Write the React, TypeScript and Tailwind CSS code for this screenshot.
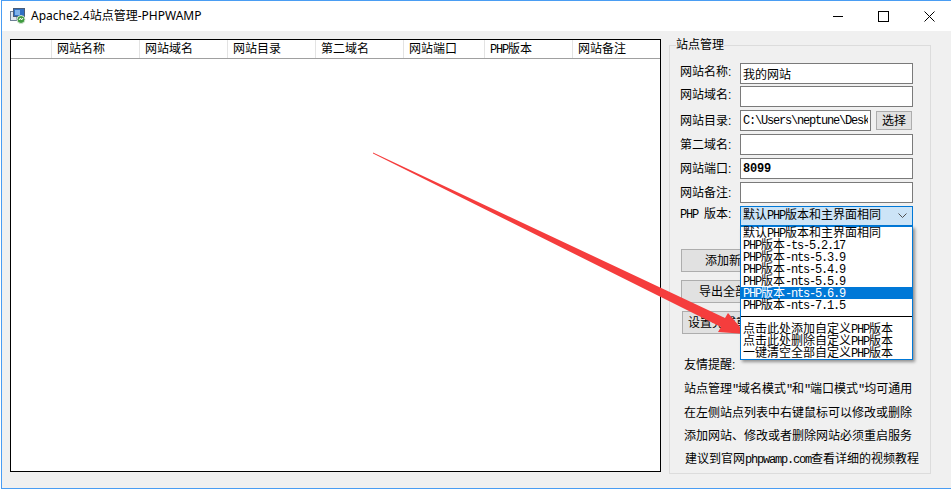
import React from 'react';

const L: React.FC<{ children: React.ReactNode }> = ({ children }) => (
  <span className="font-['Liberation_Mono','Noto_Sans_CJK_SC',monospace] tracking-[-1.2px]">{children}</span>
);

const columns = [
  { name: '', width: 'w-[41px]' },
  { name: '网站名称', width: 'w-[88px]' },
  { name: '网站域名', width: 'w-[88px]' },
  { name: '网站目录', width: 'w-[88px]' },
  { name: '第二域名', width: 'w-[88px]' },
  { name: '网站端口', width: 'w-[81px]' },
  { name: 'PHP', rest: '版本', width: 'w-[88px]' },
];

const versions = ['-ts-5.2.17', '-nts-5.3.9', '-nts-5.4.9', '-nts-5.5.9', '-nts-5.6.9', '-nts-7.1.5'];

const AppIcon = () => (
  <svg width="17" height="16" viewBox="0 0 17 16" className="shrink-0">
    <rect x="0.5" y="3.5" width="6" height="9" fill="#dfe6ee" stroke="#6d7f96" />
    <rect x="3.5" y="0.5" width="11" height="8" fill="#2f6fc4" stroke="#4a5d78" />
    <rect x="5" y="2" width="5" height="5" fill="#7fb2ea" />
    <rect x="6" y="9" width="7" height="3" fill="#9aa7b8" />
    <circle cx="11" cy="11.5" r="4" fill="#3f9b3f" stroke="#d8e4d8" />
    <path d="M9 12l1.5-2 1 2 1.5-2" fill="none" stroke="#fff" strokeWidth="1" />
  </svg>
);

const Field: React.FC<{ label: React.ReactNode; className?: string; raised?: boolean; children: React.ReactNode }> = ({ label, className, raised, children }) => (
  <div className={`flex h-[21px] items-center ${className ?? ''}`}>
    <span className={`w-[60px] shrink-0 whitespace-nowrap ${raised ? 'pb-[3px]' : ''}`}>{label}</span>
    {children}
  </div>
);

const TextBox: React.FC<{ value?: string; className?: string }> = ({ value, className }) => (
  <input
    readOnly
    value={value ?? ''}
    className={`h-[21px] w-[173px] border border-[#7a7a7a] bg-white px-[2px] leading-[19px] outline-none ${className ?? ''}`}
  />
);

const ActionButton: React.FC<{ className?: string; children: React.ReactNode }> = ({ className, children }) => (
  <button className={`flex h-[23px] w-[108px] items-center justify-center whitespace-nowrap border border-[#adadad] bg-[#e1e1e1] ${className ?? ''}`}>
    {children}
  </button>
);

const Option: React.FC<{ active?: boolean; children: React.ReactNode }> = ({ active, children }) => (
  <div className={`h-[12px] whitespace-nowrap pl-[2px] leading-[12px] ${active ? 'bg-[#0078d7] text-white' : ''}`}>{children}</div>
);

export default function App() {
  return (
    <div className="relative h-[490px] w-[951px] overflow-hidden bg-white pb-px pl-px font-['Liberation_Sans','Noto_Sans_CJK_SC',sans-serif] text-[12px] text-black">
      <div className="flex h-full flex-col border-t border-b border-l border-[#4a9df3]">
        {/* title bar */}
        <div className="flex h-[30px] shrink-0 items-center bg-white pl-[8px]">
          <AppIcon />
          <span className="ml-[4px] font-['Noto_Sans','Noto_Sans_CJK_SC',sans-serif] text-[12px]">Apache2.4站点管理-PHPWAMP</span>
          <div className="ml-auto flex h-full">
            <div className="flex w-[45px] items-center justify-center">
              <svg width="10" height="10" viewBox="0 0 10 10"><path d="M0 5.5h10" stroke="#000" /></svg>
            </div>
            <div className="flex w-[47px] items-center justify-center">
              <svg width="11" height="11" viewBox="0 0 11 11"><rect x="0.5" y="0.5" width="10" height="10" fill="none" stroke="#000" /></svg>
            </div>
            <div className="flex w-[44px] items-center justify-center">
              <svg width="11" height="11" viewBox="0 0 11 11"><path d="M0.5 0.5l10 10M10.5 0.5l-10 10" stroke="#000" /></svg>
            </div>
          </div>
        </div>

        <div className="flex min-h-0 flex-1 bg-[#f0f0f0] pl-[8px]">
          {/* site list */}
          <div className="mt-[8px] h-[433px] w-[651px] shrink-0 border border-black bg-white">
            <div className="flex h-[19px] border-b border-[#a0a0a0]">
              {columns.map((c, i) => (
                <div key={i} className={`${c.width} shrink-0 border-r border-[#e3e3e3] pl-[5px] leading-[18px] whitespace-nowrap`}>
                  {c.rest ? <><L>{c.name}</L>{c.rest}</> : c.name}
                </div>
              ))}
              <div className="flex-1 pl-[5px] leading-[18px]">网站备注</div>
            </div>
          </div>

          {/* site management */}
          <fieldset className="ml-[8px] mt-[7px] h-[436px] w-[262px] shrink-0 border border-[#dcdcdc] pl-[10px]">
            <legend className="ml-[-4px] px-0 text-[12px] leading-[15px]">站点管理</legend>
            <div className="mt-[10px] flex flex-col gap-[3px]">
              <Field raised label="网站名称:"><TextBox value="我的网站" /></Field>
              <Field raised label="网站域名:" className="-mt-px"><TextBox /></Field>
              <Field label="网站目录:">
                <input
                  readOnly
                  value="C:\Users\neptune\Desktop"
                  className="h-[21px] w-[131px] border border-[#7a7a7a] bg-white px-[2px] font-['Liberation_Mono',monospace] tracking-[-1.2px] outline-none"
                />
                <button className="ml-[5px] h-[19px] w-[36px] border border-[#adadad] bg-[#e1e1e1] leading-[16px]">选择</button>
              </Field>
              <Field label="第二域名:"><TextBox /></Field>
              <Field label="网站端口:"><TextBox value="8099" className="font-['Liberation_Mono',monospace] font-bold tracking-[-0.2px]" /></Field>
              <Field label="网站备注:"><TextBox /></Field>
              <Field raised label={<><L>PHP&nbsp;</L>版本:</>} className="-mt-px">
                <div className="relative z-20 h-[20px] w-[173px]">
                  <div className="flex h-[20px] items-center justify-between border border-[#0078d7] bg-[#cce4f7] pl-[2px] pr-[5px]">
                    <span className="whitespace-nowrap">默认<L>PHP</L>版本和主界面相同</span>
                    <svg width="9" height="6" viewBox="0 0 9 6"><path d="M0.5 0.5l4 4 4-4" fill="none" stroke="#505050" /></svg>
                  </div>
                  <div className="absolute left-0 top-[20px] h-[134px] w-[173px] border border-[#0078d7] bg-white shadow-[2px_2px_3px_rgba(0,0,0,0.4)]">
                    <Option>默认<L>PHP</L>版本和主界面相同</Option>
                    {versions.map((v) => (
                      <Option key={v} active={v === '-nts-5.6.9'}><L>PHP</L>版本<L>{v}</L></Option>
                    ))}
                    <div className="flex h-[12px] items-center"><div className="mt-[-1px] h-px w-full bg-black" /></div>
                    <Option>点击此处添加自定义<L>PHP</L>版本</Option>
                    <Option>点击此处删除自定义<L>PHP</L>版本</Option>
                    <Option>一键清空全部自定义<L>PHP</L>版本</Option>
                  </div>
                </div>
              </Field>
            </div>

            <div className="mt-[23px] flex flex-col gap-[8px] pl-px">
              <ActionButton>添加新网站</ActionButton>
              <ActionButton>导出全部网站</ActionButton>
              <ActionButton className="ml-px">设置完成重启服务</ActionButton>
            </div>

            <div className="mt-[20px] pl-[4px] leading-[23px] whitespace-nowrap">
              <div>友情提醒:</div>
              <div className="mt-px">站点管理<L>"</L>域名模式<L>"</L>和<L>"</L>端口模式<L>"</L>均可通用</div>
              <div>在左侧站点列表中右键鼠标可以修改或删除</div>
              <div>添加网站、修改或者删除网站必须重启服务</div>
              <div className="pl-px">建议到官网<L>phpwamp.com</L>查看详细的视频教程</div>
            </div>
          </fieldset>
        </div>
      </div>

      {/* red annotation arrow, the open list sits above it */}
      <svg width="951" height="490" viewBox="0 0 951 490" className="pointer-events-none absolute left-0 top-0 z-10">
        <polygon points="373,152.5 725,318 728,313 746,334 718,332 721,327 373,153.5" fill="#f53d3d" />
      </svg>
    </div>
  );
}
